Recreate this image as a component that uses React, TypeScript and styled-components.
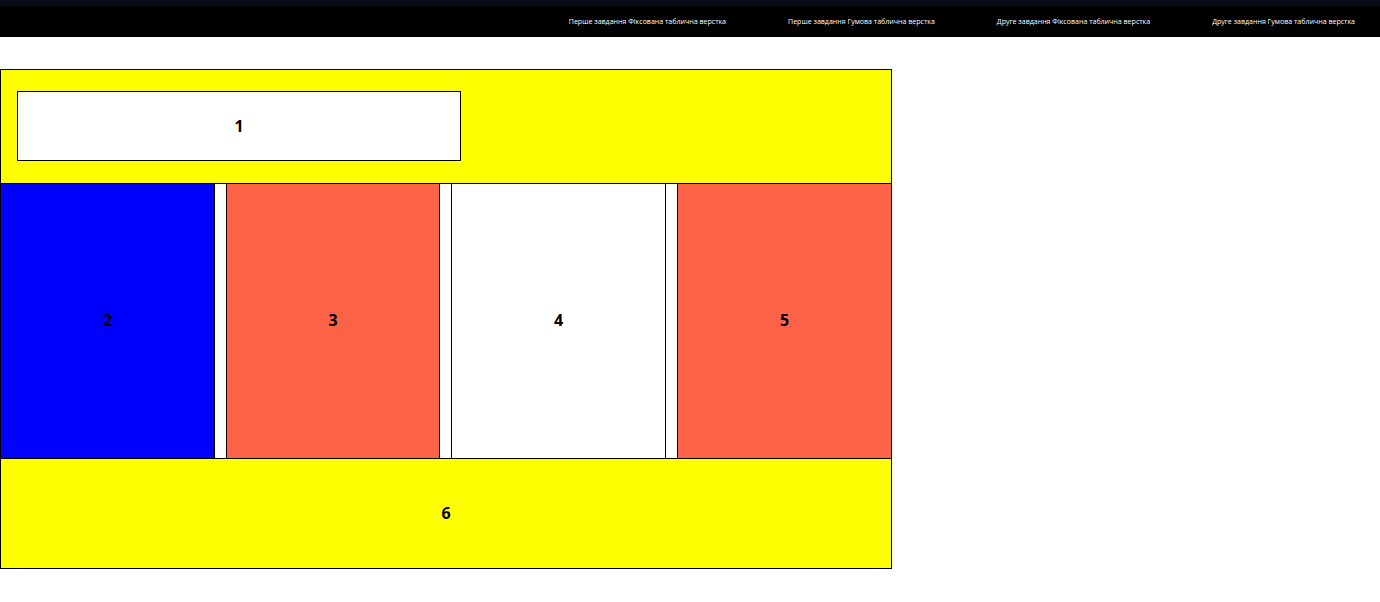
import React from 'react'
import styled, { createGlobalStyle } from 'styled-components'

const GlobalStyle = createGlobalStyle`
  html, body {
    margin: 0;
    padding: 0;
    background: #fff;
    font-family: "Open Sans", "Noto Sans", sans-serif;
  }
  * {
    box-sizing: border-box;
  }
`

const NavBar = styled.nav`
  height: 37px;
  display: flex;
  justify-content: flex-end;
  align-items: center;
  gap: 62px;
  padding: 5px 25px 0 0;
  background: linear-gradient(#0a0a1a 0, #0a0a1a 6px, #000 6px);
`

const NavLink = styled.a`
  font-size: 7.05px;
  line-height: 12px;
  color: #fff;
  text-decoration: none;
  white-space: nowrap;
`

const Layout = styled.main`
  width: 892px;
  margin-top: 32px;
`

const Cell = styled.div<{ $bg: string }>`
  display: flex;
  align-items: center;
  justify-content: center;
  background: ${({ $bg }) => $bg};
  font-size: 16px;
  font-weight: 700;
  color: #000;
`

const Header = styled.header`
  height: 115px;
  padding: 21px 16px;
  background: #ff0;
  border: 1px solid #000;
`

const Logo = styled(Cell)`
  width: 444px;
  height: 70px;
  border: 1px solid #000;
`

const Columns = styled.section`
  height: 274px;
  display: grid;
  grid-template-columns: 215px 214px 215px 215px;
  column-gap: 11px;
`

const Column = styled(Cell)`
  padding-bottom: 3px;
  border-left: 1px solid #000;
  border-right: 1px solid #000;
`

const Footer = styled(Cell)`
  height: 111px;
  padding-bottom: 2px;
  border: 1px solid #000;
`

const links = [
  'Перше завдання Фіксована таблична верстка',
  'Перше завдання Гумова таблична верстка',
  'Друге завдання Фіксована таблична верстка',
  'Друге завдання Гумова таблична верстка',
]

const columns = [
  { label: '2', bg: '#0000ff' },
  { label: '3', bg: '#ff6347' },
  { label: '4', bg: '#ffffff' },
  { label: '5', bg: '#ff6347' },
]

const App: React.FC = () => {
  return (
    <>
      <GlobalStyle />
      <NavBar>
        {links.map((link) => (
          <NavLink href="#" key={link}>
            {link}
          </NavLink>
        ))}
      </NavBar>
      <Layout>
        <Header>
          <Logo $bg="#ffffff">1</Logo>
        </Header>
        <Columns>
          {columns.map((col) => (
            <Column $bg={col.bg} key={col.label}>
              {col.label}
            </Column>
          ))}
        </Columns>
        <Footer $bg="#ffff00">6</Footer>
      </Layout>
    </>
  )
}

export default App
